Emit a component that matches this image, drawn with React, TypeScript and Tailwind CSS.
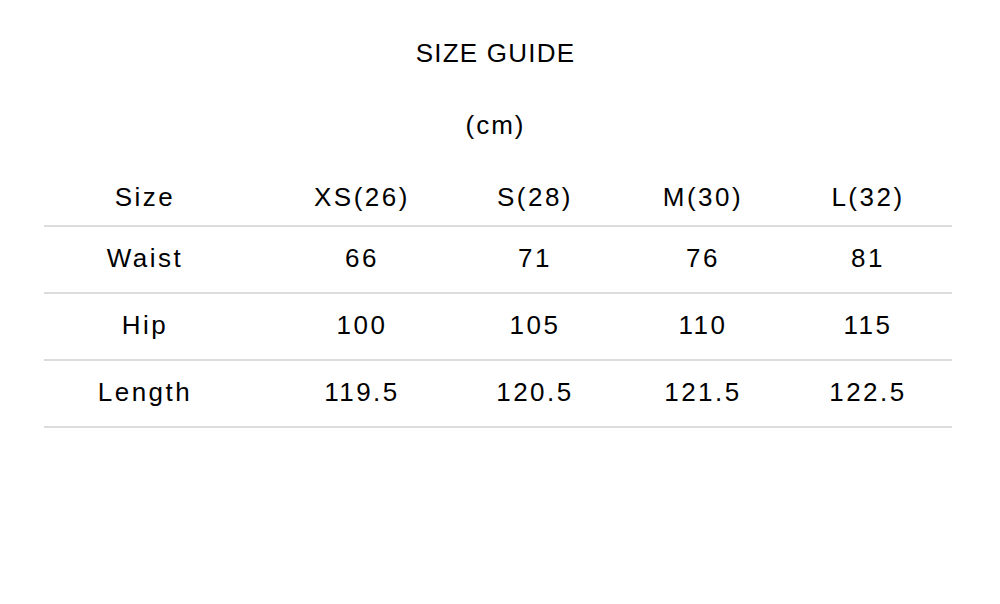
const sizes = ['XS(26)', 'S(28)', 'M(30)', 'L(32)']

const rows = [
  { label: 'Waist', values: ['66', '71', '76', '81'] },
  { label: 'Hip', values: ['100', '105', '110', '115'] },
  { label: 'Length', values: ['119.5', '120.5', '121.5', '122.5'] },
]

const grid = 'grid grid-cols-[232px_172px_174px_162px_168px] items-center text-center'

export default function App() {
  return (
    <div className="h-[604px] w-[1000px] bg-white font-['Liberation_Sans',Arial,sans-serif] text-[26px] text-black">
      <div className="pt-[38px] pr-[9px] text-center">
        <h1 className="leading-[30px] tracking-[1.2px]">SIZE GUIDE</h1>
        <p className="mt-[42px] leading-[30px] tracking-[2px]">(cm)</p>
      </div>

      {/* Size table */}
      <div className="ml-[44px] mt-[27px] w-[908px] tracking-[2.5px]">
        <div className={`${grid} h-[60px] border-b-2 border-[#dcdcdc] pt-[2px]`}>
          <div className="pr-[30px]">Size</div>
          {sizes.map((s) => (
            <div key={s}>{s}</div>
          ))}
        </div>
        {rows.map((row) => (
          <div key={row.label} className={`${grid} h-[67px] border-b-2 border-[#dcdcdc] pb-[2px]`}>
            <div className="pr-[30px]">{row.label}</div>
            {row.values.map((v, i) => (
              <div key={i}>{v}</div>
            ))}
          </div>
        ))}
      </div>
    </div>
  )
}
